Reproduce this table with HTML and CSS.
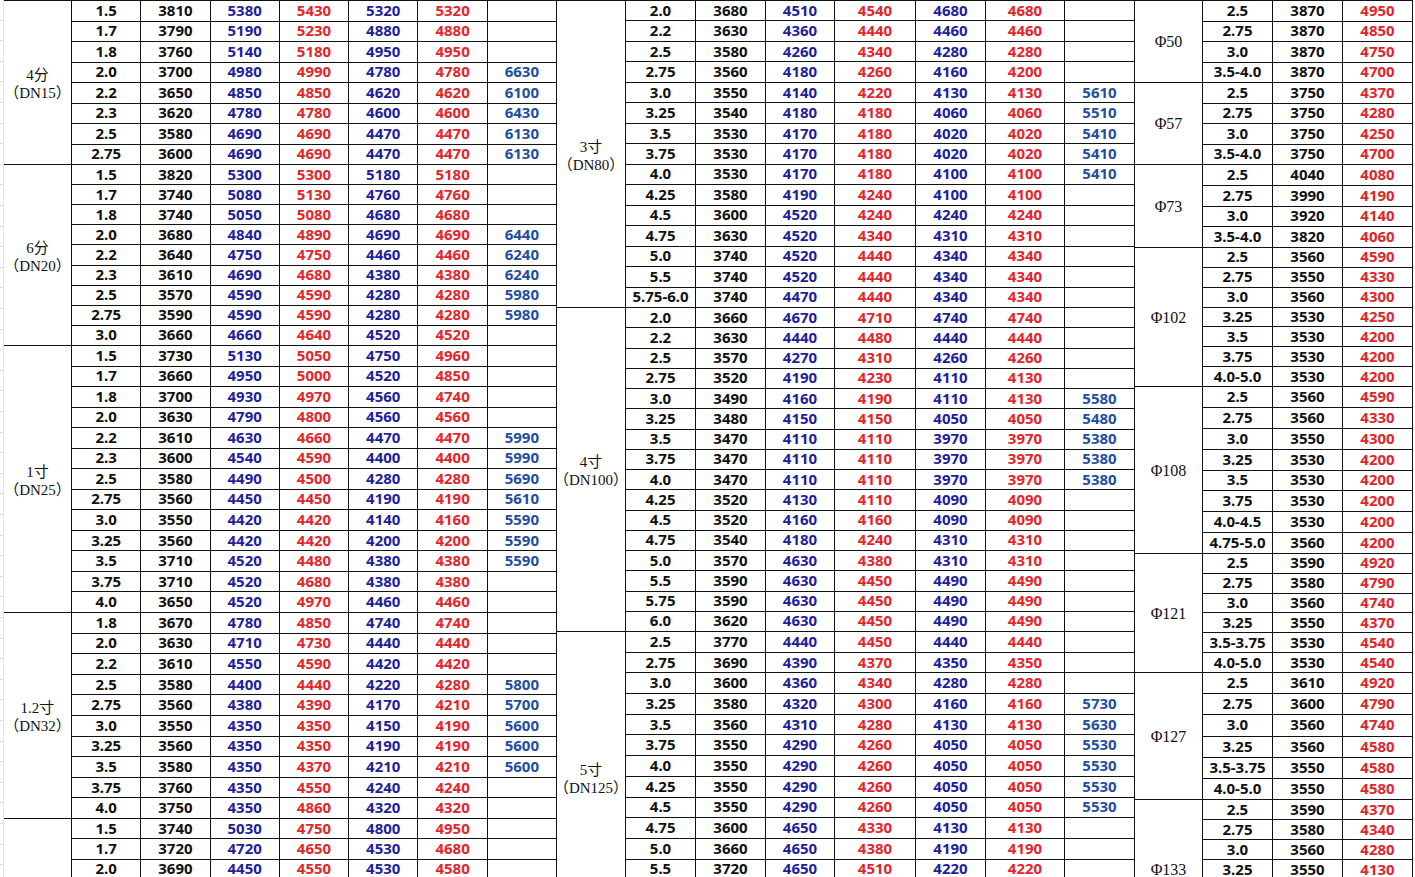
FILE: index.html
```html
<!DOCTYPE html>
<html lang="zh-CN">
<head>
<meta charset="utf-8">
<title>价格表</title>
<link rel="stylesheet" href="styles.css">
</head>
<body>
<div class="sheet">
  <div class="gutter"></div>

  <div class="sec s1">
    <div class="grp h164">
      <div class="lab">4分<br>（DN15）</div>
      <div class="rows">
        <div class="r"><span>1.5</span><span>3810</span><span>5380</span><span>5430</span><span>5320</span><span>5320</span><span></span></div>
        <div class="r"><span>1.7</span><span>3790</span><span>5190</span><span>5230</span><span>4880</span><span>4880</span><span></span></div>
        <div class="r"><span>1.8</span><span>3760</span><span>5140</span><span>5180</span><span>4950</span><span>4950</span><span></span></div>
        <div class="r"><span>2.0</span><span>3700</span><span>4980</span><span>4990</span><span>4780</span><span>4780</span><span>6630</span></div>
        <div class="r"><span>2.2</span><span>3650</span><span>4850</span><span>4850</span><span>4620</span><span>4620</span><span>6100</span></div>
        <div class="r"><span>2.3</span><span>3620</span><span>4780</span><span>4780</span><span>4600</span><span>4600</span><span>6430</span></div>
        <div class="r"><span>2.5</span><span>3580</span><span>4690</span><span>4690</span><span>4470</span><span>4470</span><span>6130</span></div>
        <div class="r"><span>2.75</span><span>3600</span><span>4690</span><span>4690</span><span>4470</span><span>4470</span><span>6130</span></div>
      </div>
    </div>
    <div class="grp h181">
      <div class="lab">6分<br>（DN20）</div>
      <div class="rows">
        <div class="r"><span>1.5</span><span>3820</span><span>5300</span><span>5300</span><span>5180</span><span>5180</span><span></span></div>
        <div class="r"><span>1.7</span><span>3740</span><span>5080</span><span>5130</span><span>4760</span><span>4760</span><span></span></div>
        <div class="r"><span>1.8</span><span>3740</span><span>5050</span><span>5080</span><span>4680</span><span>4680</span><span></span></div>
        <div class="r"><span>2.0</span><span>3680</span><span>4840</span><span>4890</span><span>4690</span><span>4690</span><span>6440</span></div>
        <div class="r"><span>2.2</span><span>3640</span><span>4750</span><span>4750</span><span>4460</span><span>4460</span><span>6240</span></div>
        <div class="r"><span>2.3</span><span>3610</span><span>4690</span><span>4680</span><span>4380</span><span>4380</span><span>6240</span></div>
        <div class="r"><span>2.5</span><span>3570</span><span>4590</span><span>4590</span><span>4280</span><span>4280</span><span>5980</span></div>
        <div class="r"><span>2.75</span><span>3590</span><span>4590</span><span>4590</span><span>4280</span><span>4280</span><span>5980</span></div>
        <div class="r"><span>3.0</span><span>3660</span><span>4660</span><span>4640</span><span>4520</span><span>4520</span><span></span></div>
      </div>
    </div>
    <div class="grp h267">
      <div class="lab">1寸<br>（DN25）</div>
      <div class="rows">
        <div class="r"><span>1.5</span><span>3730</span><span>5130</span><span>5050</span><span>4750</span><span>4960</span><span></span></div>
        <div class="r"><span>1.7</span><span>3660</span><span>4950</span><span>5000</span><span>4520</span><span>4850</span><span></span></div>
        <div class="r"><span>1.8</span><span>3700</span><span>4930</span><span>4970</span><span>4560</span><span>4740</span><span></span></div>
        <div class="r"><span>2.0</span><span>3630</span><span>4790</span><span>4800</span><span>4560</span><span>4560</span><span></span></div>
        <div class="r"><span>2.2</span><span>3610</span><span>4630</span><span>4660</span><span>4470</span><span>4470</span><span>5990</span></div>
        <div class="r"><span>2.3</span><span>3600</span><span>4540</span><span>4590</span><span>4400</span><span>4400</span><span>5990</span></div>
        <div class="r"><span>2.5</span><span>3580</span><span>4490</span><span>4500</span><span>4280</span><span>4280</span><span>5690</span></div>
        <div class="r"><span>2.75</span><span>3560</span><span>4450</span><span>4450</span><span>4190</span><span>4190</span><span>5610</span></div>
        <div class="r"><span>3.0</span><span>3550</span><span>4420</span><span>4420</span><span>4140</span><span>4160</span><span>5590</span></div>
        <div class="r"><span>3.25</span><span>3560</span><span>4420</span><span>4420</span><span>4200</span><span>4200</span><span>5590</span></div>
        <div class="r"><span>3.5</span><span>3710</span><span>4520</span><span>4480</span><span>4380</span><span>4380</span><span>5590</span></div>
        <div class="r"><span>3.75</span><span>3710</span><span>4520</span><span>4680</span><span>4380</span><span>4380</span><span></span></div>
        <div class="r"><span>4.0</span><span>3650</span><span>4520</span><span>4970</span><span>4460</span><span>4460</span><span></span></div>
      </div>
    </div>
    <div class="grp h206">
      <div class="lab">1.2寸<br>（DN32）</div>
      <div class="rows">
        <div class="r"><span>1.8</span><span>3670</span><span>4780</span><span>4850</span><span>4740</span><span>4740</span><span></span></div>
        <div class="r"><span>2.0</span><span>3630</span><span>4710</span><span>4730</span><span>4440</span><span>4440</span><span></span></div>
        <div class="r"><span>2.2</span><span>3610</span><span>4550</span><span>4590</span><span>4420</span><span>4420</span><span></span></div>
        <div class="r"><span>2.5</span><span>3580</span><span>4400</span><span>4440</span><span>4220</span><span>4280</span><span>5800</span></div>
        <div class="r"><span>2.75</span><span>3560</span><span>4380</span><span>4390</span><span>4170</span><span>4210</span><span>5700</span></div>
        <div class="r"><span>3.0</span><span>3550</span><span>4350</span><span>4350</span><span>4150</span><span>4190</span><span>5600</span></div>
        <div class="r"><span>3.25</span><span>3560</span><span>4350</span><span>4350</span><span>4190</span><span>4190</span><span>5600</span></div>
        <div class="r"><span>3.5</span><span>3580</span><span>4350</span><span>4370</span><span>4210</span><span>4210</span><span>5600</span></div>
        <div class="r"><span>3.75</span><span>3760</span><span>4350</span><span>4550</span><span>4240</span><span>4240</span><span></span></div>
        <div class="r"><span>4.0</span><span>3750</span><span>4350</span><span>4860</span><span>4320</span><span>4320</span><span></span></div>
      </div>
    </div>
    <div class="grp h203 open o203">
      <div class="lab"></div>
      <div class="rows">
        <div class="r"><span>1.5</span><span>3740</span><span>5030</span><span>4750</span><span>4800</span><span>4950</span><span></span></div>
        <div class="r"><span>1.7</span><span>3720</span><span>4720</span><span>4650</span><span>4530</span><span>4680</span><span></span></div>
        <div class="r"><span>2.0</span><span>3690</span><span>4450</span><span>4550</span><span>4530</span><span>4580</span><span></span></div>
      </div>
    </div>
  </div>

  <div class="sec s2">
    <div class="grp h307">
      <div class="lab">3寸<br>（DN80）</div>
      <div class="rows">
        <div class="r"><span>2.0</span><span>3680</span><span>4510</span><span>4540</span><span>4680</span><span>4680</span><span></span></div>
        <div class="r"><span>2.2</span><span>3630</span><span>4360</span><span>4440</span><span>4460</span><span>4460</span><span></span></div>
        <div class="r"><span>2.5</span><span>3580</span><span>4260</span><span>4340</span><span>4280</span><span>4280</span><span></span></div>
        <div class="r"><span>2.75</span><span>3560</span><span>4180</span><span>4260</span><span>4160</span><span>4200</span><span></span></div>
        <div class="r"><span>3.0</span><span>3550</span><span>4140</span><span>4220</span><span>4130</span><span>4130</span><span>5610</span></div>
        <div class="r"><span>3.25</span><span>3540</span><span>4180</span><span>4180</span><span>4060</span><span>4060</span><span>5510</span></div>
        <div class="r"><span>3.5</span><span>3530</span><span>4170</span><span>4180</span><span>4020</span><span>4020</span><span>5410</span></div>
        <div class="r"><span>3.75</span><span>3530</span><span>4170</span><span>4180</span><span>4020</span><span>4020</span><span>5410</span></div>
        <div class="r"><span>4.0</span><span>3530</span><span>4170</span><span>4180</span><span>4100</span><span>4100</span><span>5410</span></div>
        <div class="r"><span>4.25</span><span>3580</span><span>4190</span><span>4240</span><span>4100</span><span>4100</span><span></span></div>
        <div class="r"><span>4.5</span><span>3600</span><span>4520</span><span>4240</span><span>4240</span><span>4240</span><span></span></div>
        <div class="r"><span>4.75</span><span>3630</span><span>4520</span><span>4340</span><span>4310</span><span>4310</span><span></span></div>
        <div class="r"><span>5.0</span><span>3740</span><span>4520</span><span>4440</span><span>4340</span><span>4340</span><span></span></div>
        <div class="r"><span>5.5</span><span>3740</span><span>4520</span><span>4440</span><span>4340</span><span>4340</span><span></span></div>
        <div class="r"><span>5.75-6.0</span><span>3740</span><span>4470</span><span>4440</span><span>4340</span><span>4340</span><span></span></div>
      </div>
    </div>
    <div class="grp h324">
      <div class="lab">4寸<br>（DN100）</div>
      <div class="rows">
        <div class="r"><span>2.0</span><span>3660</span><span>4670</span><span>4710</span><span>4740</span><span>4740</span><span></span></div>
        <div class="r"><span>2.2</span><span>3630</span><span>4440</span><span>4480</span><span>4440</span><span>4440</span><span></span></div>
        <div class="r"><span>2.5</span><span>3570</span><span>4270</span><span>4310</span><span>4260</span><span>4260</span><span></span></div>
        <div class="r"><span>2.75</span><span>3520</span><span>4190</span><span>4230</span><span>4110</span><span>4130</span><span></span></div>
        <div class="r"><span>3.0</span><span>3490</span><span>4160</span><span>4190</span><span>4110</span><span>4130</span><span>5580</span></div>
        <div class="r"><span>3.25</span><span>3480</span><span>4150</span><span>4150</span><span>4050</span><span>4050</span><span>5480</span></div>
        <div class="r"><span>3.5</span><span>3470</span><span>4110</span><span>4110</span><span>3970</span><span>3970</span><span>5380</span></div>
        <div class="r"><span>3.75</span><span>3470</span><span>4110</span><span>4110</span><span>3970</span><span>3970</span><span>5380</span></div>
        <div class="r"><span>4.0</span><span>3470</span><span>4110</span><span>4110</span><span>3970</span><span>3970</span><span>5380</span></div>
        <div class="r"><span>4.25</span><span>3520</span><span>4130</span><span>4110</span><span>4090</span><span>4090</span><span></span></div>
        <div class="r"><span>4.5</span><span>3520</span><span>4160</span><span>4160</span><span>4090</span><span>4090</span><span></span></div>
        <div class="r"><span>4.75</span><span>3540</span><span>4180</span><span>4240</span><span>4310</span><span>4310</span><span></span></div>
        <div class="r"><span>5.0</span><span>3570</span><span>4630</span><span>4380</span><span>4310</span><span>4310</span><span></span></div>
        <div class="r"><span>5.5</span><span>3590</span><span>4630</span><span>4450</span><span>4490</span><span>4490</span><span></span></div>
        <div class="r"><span>5.75</span><span>3590</span><span>4630</span><span>4450</span><span>4490</span><span>4490</span><span></span></div>
        <div class="r"><span>6.0</span><span>3620</span><span>4630</span><span>4450</span><span>4490</span><span>4490</span><span></span></div>
      </div>
    </div>
    <div class="grp h292 open o207">
      <div class="lab">5寸<br>（DN125）</div>
      <div class="rows">
        <div class="r"><span>2.5</span><span>3770</span><span>4440</span><span>4450</span><span>4440</span><span>4440</span><span></span></div>
        <div class="r"><span>2.75</span><span>3690</span><span>4390</span><span>4370</span><span>4350</span><span>4350</span><span></span></div>
        <div class="r"><span>3.0</span><span>3600</span><span>4360</span><span>4340</span><span>4280</span><span>4280</span><span></span></div>
        <div class="r"><span>3.25</span><span>3580</span><span>4320</span><span>4300</span><span>4160</span><span>4160</span><span>5730</span></div>
        <div class="r"><span>3.5</span><span>3560</span><span>4310</span><span>4280</span><span>4130</span><span>4130</span><span>5630</span></div>
        <div class="r"><span>3.75</span><span>3550</span><span>4290</span><span>4260</span><span>4050</span><span>4050</span><span>5530</span></div>
        <div class="r"><span>4.0</span><span>3550</span><span>4290</span><span>4260</span><span>4050</span><span>4050</span><span>5530</span></div>
        <div class="r"><span>4.25</span><span>3550</span><span>4290</span><span>4260</span><span>4050</span><span>4050</span><span>5530</span></div>
        <div class="r"><span>4.5</span><span>3550</span><span>4290</span><span>4260</span><span>4050</span><span>4050</span><span>5530</span></div>
        <div class="r"><span>4.75</span><span>3600</span><span>4650</span><span>4330</span><span>4130</span><span>4130</span><span></span></div>
        <div class="r"><span>5.0</span><span>3660</span><span>4650</span><span>4380</span><span>4190</span><span>4190</span><span></span></div>
        <div class="r"><span>5.5</span><span>3720</span><span>4650</span><span>4510</span><span>4220</span><span>4220</span><span></span></div>
      </div>
    </div>
  </div>

  <div class="sec s3">
    <div class="grp h82">
      <div class="lab phi">Φ50</div>
      <div class="rows">
        <div class="r"><span>2.5</span><span>3870</span><span>4950</span></div>
        <div class="r"><span>2.75</span><span>3870</span><span>4850</span></div>
        <div class="r"><span>3.0</span><span>3870</span><span>4750</span></div>
        <div class="r"><span>3.5-4.0</span><span>3870</span><span>4700</span></div>
      </div>
    </div>
    <div class="grp h82">
      <div class="lab phi">Φ57</div>
      <div class="rows">
        <div class="r"><span>2.5</span><span>3750</span><span>4370</span></div>
        <div class="r"><span>2.75</span><span>3750</span><span>4280</span></div>
        <div class="r"><span>3.0</span><span>3750</span><span>4250</span></div>
        <div class="r"><span>3.5-4.0</span><span>3750</span><span>4700</span></div>
      </div>
    </div>
    <div class="grp h83">
      <div class="lab phi">Φ73</div>
      <div class="rows">
        <div class="r"><span>2.5</span><span>4040</span><span>4080</span></div>
        <div class="r"><span>2.75</span><span>3990</span><span>4190</span></div>
        <div class="r"><span>3.0</span><span>3920</span><span>4140</span></div>
        <div class="r"><span>3.5-4.0</span><span>3820</span><span>4060</span></div>
      </div>
    </div>
    <div class="grp h139">
      <div class="lab phi">Φ102</div>
      <div class="rows">
        <div class="r"><span>2.5</span><span>3560</span><span>4590</span></div>
        <div class="r"><span>2.75</span><span>3550</span><span>4330</span></div>
        <div class="r"><span>3.0</span><span>3560</span><span>4300</span></div>
        <div class="r"><span>3.25</span><span>3530</span><span>4250</span></div>
        <div class="r"><span>3.5</span><span>3530</span><span>4200</span></div>
        <div class="r"><span>3.75</span><span>3530</span><span>4200</span></div>
        <div class="r"><span>4.0-5.0</span><span>3530</span><span>4200</span></div>
      </div>
    </div>
    <div class="grp h167">
      <div class="lab phi">Φ108</div>
      <div class="rows">
        <div class="r"><span>2.5</span><span>3560</span><span>4590</span></div>
        <div class="r"><span>2.75</span><span>3560</span><span>4330</span></div>
        <div class="r"><span>3.0</span><span>3550</span><span>4300</span></div>
        <div class="r"><span>3.25</span><span>3530</span><span>4200</span></div>
        <div class="r"><span>3.5</span><span>3530</span><span>4200</span></div>
        <div class="r"><span>3.75</span><span>3530</span><span>4200</span></div>
        <div class="r"><span>4.0-4.5</span><span>3530</span><span>4200</span></div>
        <div class="r"><span>4.75-5.0</span><span>3560</span><span>4200</span></div>
      </div>
    </div>
    <div class="grp h119">
      <div class="lab phi">Φ121</div>
      <div class="rows">
        <div class="r"><span>2.5</span><span>3590</span><span>4920</span></div>
        <div class="r"><span>2.75</span><span>3580</span><span>4790</span></div>
        <div class="r"><span>3.0</span><span>3560</span><span>4740</span></div>
        <div class="r"><span>3.25</span><span>3550</span><span>4370</span></div>
        <div class="r"><span>3.5-3.75</span><span>3530</span><span>4540</span></div>
        <div class="r"><span>4.0-5.0</span><span>3530</span><span>4540</span></div>
      </div>
    </div>
    <div class="grp h127">
      <div class="lab phi">Φ127</div>
      <div class="rows">
        <div class="r"><span>2.5</span><span>3610</span><span>4920</span></div>
        <div class="r"><span>2.75</span><span>3600</span><span>4790</span></div>
        <div class="r"><span>3.0</span><span>3560</span><span>4740</span></div>
        <div class="r"><span>3.25</span><span>3560</span><span>4580</span></div>
        <div class="r"><span>3.5-3.75</span><span>3550</span><span>4580</span></div>
        <div class="r"><span>4.0-5.0</span><span>3550</span><span>4580</span></div>
      </div>
    </div>
    <div class="grp h140 open o200">
      <div class="lab phi">Φ133</div>
      <div class="rows">
        <div class="r"><span>2.5</span><span>3590</span><span>4370</span></div>
        <div class="r"><span>2.75</span><span>3580</span><span>4340</span></div>
        <div class="r"><span>3.0</span><span>3560</span><span>4280</span></div>
        <div class="r"><span>3.25</span><span>3550</span><span>4130</span></div>
      </div>
    </div>
  </div>
</div>
</body>
</html>
```

FILE: styles.css
```css
* { box-sizing: border-box; }
html, body { margin: 0; padding: 0; }
body {
  width: 1415px;
  height: 877px;
  overflow: hidden;
  background: #fff;
  font-family: "Noto Sans", "Liberation Sans", sans-serif;
}
.sheet { display: flex; height: 877px; overflow: hidden; }
.gutter {
  flex: none;
  width: 4px;
  background: repeating-linear-gradient(to bottom, #fff 0, #fff 19.6px, #dcdcdc 19.6px, #dcdcdc 20.6px);
  border-right: 1px solid #e4e4e4;
}
.sec {
  flex: none;
  display: flex;
  flex-direction: column;
  border-top: 1px solid #111;
}
.s1 { width: 553px; }
.s2 { width: 578px; }
.s3 { width: 278px; }

.grp { flex: none; display: flex; }
.h82 { height: 82px; } .h83 { height: 83px; } .h119 { height: 119px; }
.h127 { height: 127px; } .h139 { height: 139px; } .h140 { height: 140px; }
.h164 { height: 164px; } .h167 { height: 167px; } .h181 { height: 181px; }
.h203 { height: 203px; } .h206 { height: 206px; } .h267 { height: 267px; }
.h292 { height: 292px; } .h307 { height: 307px; } .h324 { height: 324px; }

.lab {
  flex: none;
  display: flex;
  flex-direction: column;
  align-items: center;
  justify-content: center;
  text-align: center;
  padding-top: 3px;
  border-right: 1px solid #111;
  border-bottom: 1px solid #111;
  font-family: "Liberation Serif", "Noto Sans CJK SC", serif;
  font-size: 15px;
  line-height: 18px;
  color: #111;
}
.s1 .lab { width: 68px; }
.s2 .lab { width: 69px; }
.s3 .lab { width: 68px; }
.lab.phi { font-size: 16px; padding-top: 1px; }

.rows { flex: 1; display: flex; flex-direction: column; min-width: 0; }
.r { flex: 1 1 0; min-height: 0; display: grid; }
.open .r { flex: none; }
.o203 .r { height: 20.3px; }
.o207 .r { height: 20.7px; }
.o200 .r { height: 20px; }

.s1 .r { grid-template-columns: repeat(7, 1fr); }
.s2 .r { grid-template-columns: 70px 70px 69px 81px 70px 79px 70px; }
.s3 .r { grid-template-columns: repeat(3, 1fr); }

.r span {
  display: flex;
  align-items: center;
  justify-content: center;
  min-width: 0;
  padding-bottom: 2px;
  border-right: 1px solid #111;
  border-bottom: 1px solid #111;
  font-size: 15px;
  font-weight: 700;
  line-height: 12px;
  color: #111;
  white-space: nowrap;
}
.r span:nth-child(3), .r span:nth-child(5) { color: #1f1f9c; }
.r span:nth-child(4), .r span:nth-child(6) { color: #e2262b; }
.r span:nth-child(7) { color: #1f4f9e; }
.s3 .r span:nth-child(3) { color: #d9292c; }
```
